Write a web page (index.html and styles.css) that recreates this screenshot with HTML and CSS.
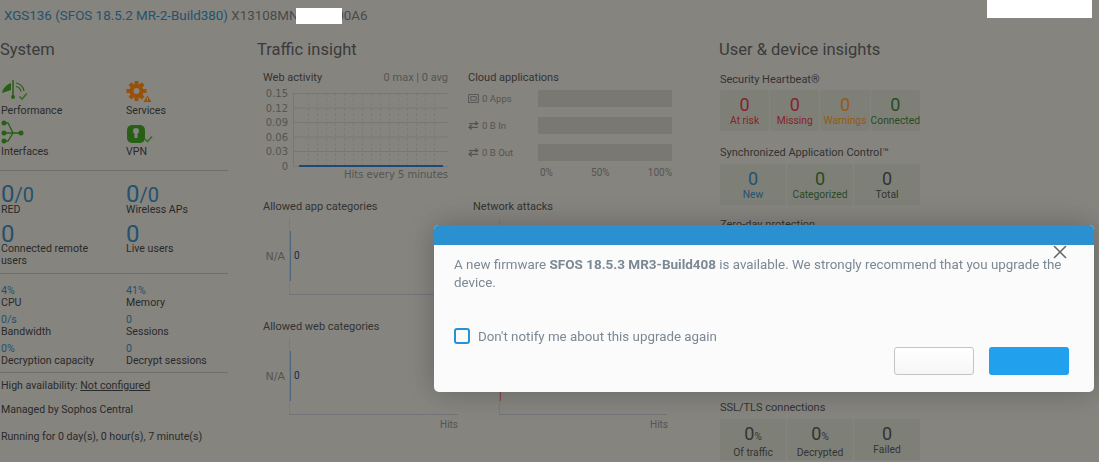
FILE: index.html
```html
<!DOCTYPE html>
<html lang="en">
<head>
<meta charset="utf-8">
<title>Control center</title>
<link rel="stylesheet" href="styles.css">
</head>
<body>
<header class="topbar"><a class="model">XGS136 (SFOS 18.5.2 MR-2-Build380)</a> <span class="serial">X13108MN0000000A6</span></header>
<main class="columns">
  <section class="system">
    <h2>System</h2>
    <div class="icon-grid">
      <div class="icon-item">
        <svg class="ic" viewBox="0 0 28 23"><path d="M1 15C2 10 5 7 10 5L10 12Z" fill="#38881f"/><path d="M12 2V19" stroke="#38881f" stroke-width="1.500"/><circle cx="12" cy="19" r="2" fill="#38881f"/><path d="M15 5C19 5.500 22.500 9 23 13M15 8.500C17.500 9 19.500 11 20 13.500" fill="none" stroke="#38881f" stroke-width="1.200"/><path d="M18.500 18.500L21 21L26 15.500" fill="none" stroke="#4a9e30" stroke-width="1.600"/></svg>
        <span>Performance</span>
      </div>
      <div class="icon-item">
        <svg class="ic" viewBox="0 0 28 23"><g fill="#d87410"><g transform="translate(.5 2.500)"><circle cx="10" cy="10.500" r="7"/><path d="M8 0.500H12V5H8ZM8 16H12V20.500H8ZM0 8.500H4.500V12.500H0ZM15.500 8.500H20V12.500H15.500Z"/><path d="M2 4.500L5 1.700L8 5L5 8ZM12 16L15 13L18 16.300L15 19ZM15 1.700L18 4.500L15 8L12 5ZM5 13L8 16L5 19L2 16.300Z"/></g><path d="M21.500 17.500L25.500 24H17.500Z"/></g><circle cx="10.500" cy="13" r="3" fill="#bfbeb7"/><path d="M21.500 19.500V22.500" stroke="#bfbeb7"/></svg>
        <span>Services</span>
      </div>
      <div class="icon-item">
        <svg class="ic" viewBox="0 0 28 23"><g fill="#38881f"><circle cx="3" cy="4" r="2.500"/><circle cx="3" cy="14" r="2.500"/><circle cx="3" cy="22" r="2.500"/><circle cx="20" cy="14" r="2.500"/></g><path d="M4 4H7L12 14L7 22H4M4 14H20" fill="none" stroke="#38881f" stroke-width="1.300"/></svg>
        <span>Interfaces</span>
      </div>
      <div class="icon-item">
        <svg class="ic" viewBox="0 0 28 23"><rect x="1" y="6" width="18" height="18" rx="5" fill="#38881f"/><circle cx="10" cy="12" r="3" fill="#bfbeb7"/><path d="M8.500 12.500H11.500V19H8.500Z" fill="#bfbeb7"/><path d="M19 20L21.500 22.500L26 17.500" fill="none" stroke="#4a9e30" stroke-width="1.600"/></svg>
        <span>VPN</span>
      </div>
    </div>
    <div class="stat-grid big rule">
      <div class="stat"><b>0<i>/0</i></b><span>RED</span></div>
      <div class="stat"><b>0<i>/0</i></b><span>Wireless APs</span></div>
      <div class="stat"><b>0</b><span>Connected remote users</span></div>
      <div class="stat"><b>0</b><span>Live users</span></div>
    </div>
    <div class="stat-grid small rule">
      <div class="stat"><b>4%</b><span>CPU</span></div>
      <div class="stat"><b>41%</b><span>Memory</span></div>
      <div class="stat"><b>0/s</b><span>Bandwidth</span></div>
      <div class="stat"><b>0</b><span>Sessions</span></div>
      <div class="stat"><b>0%</b><span>Decryption capacity</span></div>
      <div class="stat"><b>0</b><span>Decrypt sessions</span></div>
    </div>
    <div class="facts rule">
      <p class="ha">High availability: <u>Not configured</u></p>
      <p class="managed">Managed by Sophos Central</p>
      <p class="running">Running for 0 day(s), 0 hour(s), 7 minute(s)</p>
    </div>
  </section>

  <section class="traffic">
    <h2>Traffic insight</h2>
    <div class="traffic-top">
      <div class="web">
        <div class="panel-head"><h3>Web activity</h3><span class="maxavg">0 max | 0 avg</span></div>
        <svg class="chart" viewBox="0 0 198 100">
          <g class="axis-text" text-anchor="end">
            <text x="24" y="5">0.15</text><text x="24" y="19.500">0.12</text><text x="24" y="34">0.09</text><text x="24" y="48.500">0.06</text><text x="24" y="63">0.03</text><text x="24" y="78">0</text>
          </g>
          <path class="hgrid" d="M29.500 1.500H184M29.500 16H184M29.500 30.500H184M29.500 45H184M29.500 59.500H184M29.500 74.500H184M29.500 1.500V74.500"/>
          <path class="vgrid" d="M44.500 1.500V74M53.500 1.500V74M62.500 1.500V74M71.500 1.500V74M80.500 1.500V74M89.500 1.500V74M98.500 1.500V74M107.500 1.500V74M116.500 1.500V74M125.500 1.500V74M134.500 1.500V74M143.500 1.500V74M152.500 1.500V74M161.500 1.500V74M170.500 1.500V74"/>
          <path class="series" d="M35 74H179"/>
          <text class="axis-text" x="184" y="85.500" text-anchor="end">Hits every 5 minutes</text>
        </svg>
      </div>
      <div class="cloud">
        <h3>Cloud applications</h3>
        <div class="bars">
          <div class="bar-row"><svg class="mini" viewBox="0 0 12 10"><path d="M.5.500H11.500V9.500H.5ZM3 3H9V7H3Z" fill="none" stroke="#777"/></svg><span>0 Apps</span><div class="bar"></div></div>
          <div class="bar-row"><svg class="mini" viewBox="0 0 12 10"><path d="M1 3H10M8 .5L11 3L8 4.500M11 7H2M4 4.500L1 7L4 9.500" fill="none" stroke="#777" stroke-width="1.300"/></svg><span>0 B In</span><div class="bar"></div></div>
          <div class="bar-row"><svg class="mini" viewBox="0 0 12 10"><path d="M1 3H10M8 .5L11 3L8 4.500M11 7H2M4 4.500L1 7L4 9.500" fill="none" stroke="#777" stroke-width="1.300"/></svg><span>0 B Out</span><div class="bar"></div></div>
        </div>
        <div class="scale"><span>0%</span><span>50%</span><span>100%</span></div>
      </div>
    </div>
    <div class="hbar-grid">
      <div class="hbar">
        <h3>Allowed app categories</h3>
        <div class="plot"><span class="na">N/A</span><span class="mark"></span><span class="val">0</span></div>
        <div class="hits">Hits</div>
      </div>
      <div class="hbar second">
        <h3>Network attacks</h3>
        <div class="plot"><span class="mark"></span></div>
        <div class="hits">Hits</div>
      </div>
      <div class="hbar">
        <h3>Allowed web categories</h3>
        <div class="plot"><span class="na">N/A</span><span class="mark"></span><span class="val">0</span></div>
        <div class="hits">Hits</div>
      </div>
      <div class="hbar second">
        <h3>&nbsp;</h3>
        <div class="plot"><span class="mark red"></span></div>
        <div class="hits">Hits</div>
      </div>
    </div>
  </section>

  <section class="users">
    <h2>User &amp; device insights</h2>
    <h3>Security Heartbeat®</h3>
    <div class="tiles">
      <div class="tile red"><b>0</b><span>At risk</span></div>
      <div class="tile red"><b>0</b><span>Missing</span></div>
      <div class="tile orange"><b>0</b><span>Warnings</span></div>
      <div class="tile green"><b>0</b><span>Connected</span></div>
    </div>
    <h3>Synchronized Application Control™</h3>
    <div class="tiles">
      <div class="tile blue"><b>0</b><span>New</span></div>
      <div class="tile green"><b>0</b><span>Categorized</span></div>
      <div class="tile"><b>0</b><span>Total</span></div>
    </div>
    <h3 class="zero">Zero-day protection</h3>
    <h3 class="ssl">SSL/TLS connections</h3>
    <div class="tiles">
      <div class="tile"><b>0<small>%</small></b><span>Of traffic</span></div>
      <div class="tile"><b>0<small>%</small></b><span>Decrypted</span></div>
      <div class="tile"><b>0</b><span>Failed</span></div>
    </div>
  </section>
</main>

<div class="scrim"></div>
<div class="redact serial-mask"></div>
<div class="redact corner-mask"></div>

<div class="modal" role="dialog">
  <div class="modal-bar"></div>
  <svg class="close" viewBox="0 0 14 14"><path d="M1 1L13 13M13 1L1 13" stroke="#666" stroke-width="1.500" fill="none"/></svg>
  <p class="message">A new firmware <strong>SFOS 18.5.3 MR3-Build408</strong> is available. We strongly recommend that you upgrade the device.</p>
  <label class="notify"><span class="box"></span><span class="notify-text">Don't notify me about this upgrade again</span></label>
  <div class="actions"><button class="btn ghost"></button><button class="btn primary"></button></div>
</div>
</body>
</html>
```
FILE: styles.css
```css
* { box-sizing: border-box; }
html, body { height: 100%; }
body {
  margin: 0;
  overflow: hidden;
  background: #bfbeb7;
  color: #3c3c3c;
  font: 10.600px/12px Roboto, "Noto Sans", sans-serif;
}
h2 { margin: 0; height: 20px; padding-top: 1px; font-size: 16.500px; line-height: 20px; font-weight: 400; color: #555; }
h3 { margin: 0; font-size: 11px; line-height: 14px; font-weight: 400; color: #4a4a4a; }
p { margin: 0; }

.topbar { height: 39px; padding: 8px 0 0 4px; font-size: 13.400px; line-height: 15px; }
.model { color: #34759c; }
.serial { color: #6a6a6a; }

.columns { display: grid; grid-template-columns: 228px 433px 201px; column-gap: 29px; }

/* System */
.icon-grid, .stat-grid { display: grid; grid-template-columns: 125px 1fr; }
.icon-grid { margin-top: 19px; row-gap: 2px; padding-bottom: 12px; padding-left: 1px; }
.icon-item { display: flex; flex-direction: column; height: 39px; }
.icon-item span { line-height: 12px; }
.ic { width: 28px; height: 23px; flex: none; display: block; margin-bottom: 4px; overflow: visible; }
.rule { border-top: 1px solid #a09f98; }
.stat { padding-left: 1px; }
.stat b { display: block; font-weight: 400; color: #34759c; }
.stat span { display: block; max-width: 100px; }
.small .stat span { max-width: none; }
.big { padding-top: 15px; padding-bottom: 6px; row-gap: 10px; }
.big b { font-size: 24px; line-height: 17px; }
.big i { font-style: normal; font-size: 20px; }
.small { padding-top: 11px; padding-bottom: 5px; row-gap: 5px; }
.small b { line-height: 12px; }
.facts { padding: 7px 1px 0; }
.managed { margin-top: 12px; }
.running { margin-top: 15px; }

/* Traffic */
.traffic h3 { margin-left: 6px; }
.traffic-top { display: flex; margin-top: 12px; }
.web { width: 205px; }
.panel-head { display: flex; justify-content: space-between; align-items: center; width: 191px; }
.maxavg { color: #7a7a74; font-size: 11px; }
.chart { display: block; width: 198px; height: 100px; margin-top: 7px; margin-left: 7px; overflow: visible; }
.axis-text, .chart text { font: 10px "DejaVu Sans", sans-serif; fill: #7a7a74; }
.hgrid { stroke: #adaca5; stroke-width: 1; fill: none; }
.vgrid { stroke: #adaca5; stroke-width: 1; stroke-dasharray: 2 3; fill: none; }
.series { stroke: #2a6bb0; stroke-width: 2; fill: none; }
.cloud { width: 204px; margin-left: 6px; }
.traffic .cloud h3 { margin-left: 0; }
.bars { margin-top: 5px; display: flex; flex-direction: column; row-gap: 10px; }
.bar-row { display: flex; align-items: center; height: 17px; color: #7a7a74; font-size: 9.600px; }
.mini { width: 11px; height: 9px; margin-right: 3px; flex: none; }
.bar-row span { width: 56px; }
.bar { width: 134px; height: 17px; background: #aeada4; }
.scale { display: flex; justify-content: space-between; width: 132px; margin: 6px 0 0 72px; color: #7a7a74; font-size: 10px; }

.hbar-grid { display: grid; grid-template-columns: 210px 1fr; margin-top: 8px; row-gap: 9px; }
.hbar { width: 201px; }
.plot { position: relative; height: 77px; margin: 4px 0 0 32px; border-left: 1px solid #b0afa8; border-bottom: 1px solid #a5a5ac; display: flex; align-items: center; }
.second .plot { width: 168px; }
.na { position: absolute; right: 100%; margin-right: 5px; color: #7a7a74; white-space: nowrap; font: 11px "DejaVu Sans", sans-serif; }
.mark { width: 1px; height: 50px; background: #6f93b8; }
.mark.red { background: #b96a6a; }
.val { margin-left: 3px; color: #1e3f6e; font-size: 10px; }
.hits { width: 201px; text-align: right; color: #7a7a74; font-size: 10px; line-height: 12px; margin-top: 4px; }

/* Users */
.users h3 { margin-top: 15px; padding-left: 1px; }
.users h2 + h3 { margin-top: 14px; margin-bottom: -1px; }
.tiles { display: flex; gap: 1px; margin-top: 4px; padding-left: 1px; }
.tile { flex: 1; height: 41px; background: #b5b8ad; border-radius: 2px; display: flex; flex-direction: column; align-items: center; color: #4a4a4a; padding-top: 5px; white-space: nowrap; }
.tile b { font-weight: 400; font-size: 18px; line-height: 20px; }
.tile small { font-size: 10px; }
.tile span { font-size: 10.300px; line-height: 12px; }
.tile.red { color: #c0303c; }
.tile.orange { color: #d4801f; }
.tile.green { color: #3a6a32; }
.tile.blue { color: #34759c; }
.users h3.zero { margin-top: 13px; }
.users h3.ssl { margin-top: 169px; }

/* Overlay */
.scrim { position: fixed; inset: 0; background: rgba(0, 0, 0, .3); }
.redact { position: fixed; background: #fff; }
.serial-mask { left: 296px; top: 8px; width: 46px; height: 16px; }
.corner-mask { left: 987px; top: 0; width: 105px; height: 18px; }

.modal { position: fixed; left: 434px; top: 225px; width: 660px; height: 167px; background: #fbfbfb; border-radius: 5px; overflow: hidden; box-shadow: 0 0 30px rgba(0, 0, 0, .25); color: #7c8894; font-size: 13.350px; line-height: 18px; }
.modal-bar { height: 20px; background: #2b90d0; }
.close { position: absolute; left: 619px; top: 20px; width: 14px; height: 14px; }
.message { padding: 10px 30px 0 20px; }
.message strong { font-weight: 700; font-size: 13.500px; }
.notify { position: absolute; left: 20px; top: 103px; display: flex; align-items: center; height: 16px; }
.notify-text { margin-top: 1px; }
.box { width: 16px; height: 16px; border: 2px solid #2b8fd0; border-radius: 3px; margin-right: 8px; }
.actions { position: absolute; right: 25px; top: 122px; display: flex; column-gap: 15px; }
.btn { width: 80px; height: 28px; border-radius: 3px; padding: 0; }
.ghost { background: linear-gradient(#fff, #f6f6f6); border: 1px solid #c4c4c4; }
.primary { background: #21a0ee; border: 0; }
```
